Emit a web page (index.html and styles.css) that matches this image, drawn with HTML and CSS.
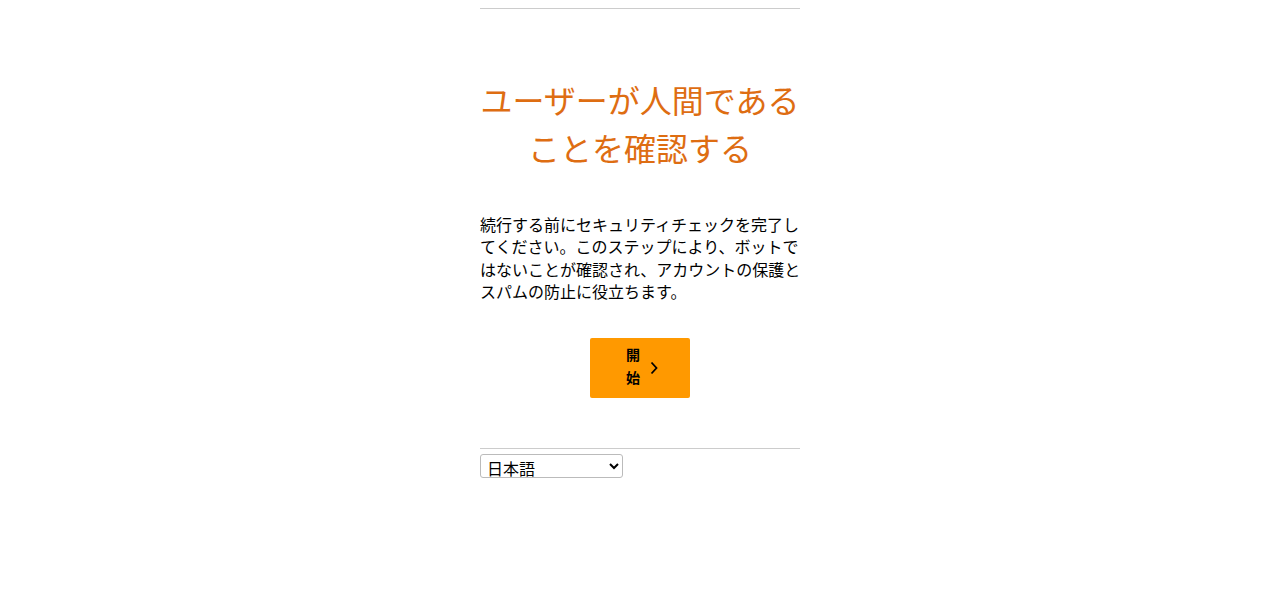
FILE: index.html
```html
<!DOCTYPE html>
<html lang="ja">
<head>
<meta charset="utf-8">
<title>確認</title>
<link rel="stylesheet" href="styles.css">
</head>
<body>
<main class="wrap">
  <section class="card">
    <h1 class="title">ユーザーが人間であることを確認する</h1>
    <p class="desc">続行する前にセキュリティチェックを完了してください。このステップにより、ボットではないことが確認され、アカウントの保護とスパムの防止に役立ちます。</p>
    <div class="actions">
      <button class="start" type="button">
        <span class="start-label">開始</span>
        <svg class="chev" width="10" height="14" viewBox="0 0 10 14" aria-hidden="true"><path d="M2.5 1.5 L7.5 7 L2.5 12.5" fill="none" stroke="#000" stroke-width="1.8"/></svg>
      </button>
    </div>
  </section>
  <footer class="foot">
    <select class="lang">
      <option>日本語</option>
      <option>English</option>
    </select>
  </footer>
</main>
</body>
</html>
```
FILE: styles.css
```css
html, body {
  margin: 0;
  padding: 0;
  background: #fff;
}
body {
  padding-top: 8px;
  font-family: "Noto Sans CJK JP", "Noto Sans", sans-serif;
  color: #000;
}
.wrap {
  width: 320px;
  margin: 0 auto;
}
.card {
  border-top: 1px solid #cccccc;
  padding-top: 66px;
  padding-bottom: 50px;
}
.title {
  margin: 0;
  font-size: 32px;
  line-height: 48px;
  font-weight: 400;
  color: #de6d12;
  text-align: center;
}
.desc {
  margin: 42px -3px 0 0;
  font-size: 16px;
  line-height: 22.4px;
}
.actions {
  display: flex;
  justify-content: center;
  margin-top: 35px;
}
.start {
  width: 100px;
  height: 60px;
  border: none;
  border-radius: 2px;
  background: #ff9900;
  display: flex;
  align-items: center;
  justify-content: center;
  gap: 8px;
  padding: 0 0 0 4px;
  cursor: pointer;
  font-family: inherit;
}
.start-label {
  width: 16px;
  font-size: 14px;
  line-height: 23px;
  font-weight: 700;
  color: #000;
  word-break: break-all;
  margin-top: -4px;
}
.chev {
  display: block;
}
.foot {
  border-top: 1px solid #cccccc;
  padding-top: 5px;
}
.lang {
  width: 143px;
  height: 24px;
  font-family: inherit;
  font-size: 16px;
  border: 1px solid #bbb;
  border-radius: 3px;
  background: #fff;
  padding: 0 2px;
}
```
